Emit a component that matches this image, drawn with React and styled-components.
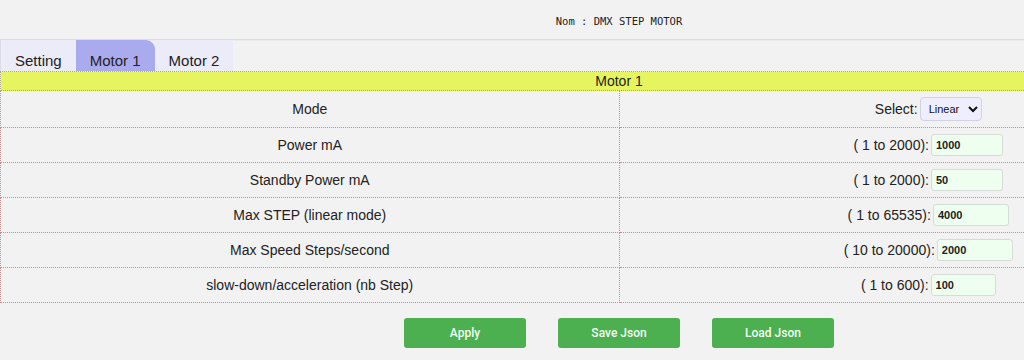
import React from 'react';
import styled, { createGlobalStyle } from 'styled-components';

const GlobalStyle = createGlobalStyle`
  html, body {
    margin: 0;
    padding: 0;
    background: #f2f2f2;
    overflow: hidden;
  }
  body {
    font-family: "Liberation Sans", Arial, sans-serif;
    color: #222;
  }
`;

const Page = styled.div`
  width: 1238px;
`;

const Header = styled.header`
  height: 36px;
  padding-top: 3px;
  display: flex;
  align-items: center;
  justify-content: center;
  border-bottom: 1px solid #dcdcdc;
  box-shadow: 0 1px 1px rgba(0, 0, 0, 0.03);
  font-family: "DejaVu Sans Mono", "Liberation Mono", monospace;
  font-size: 10.5px;
  color: #222;
  white-space: pre;
`;

const TabBar = styled.nav`
  display: flex;
  height: 31px;
`;

const Tab = styled.div`
  padding: 12px 14px 2px;
  font-size: 15px;
  line-height: 17px;
  color: #222;
  cursor: pointer;
  background: ${(p) => (p.$active ? '#aaaaee' : '#ececf9')};
  border-top-right-radius: ${(p) => (p.$active ? '9px' : '0')};
  border-left: ${(p) => (p.$first ? '1px solid #dcdce6' : 'none')};
`;

const Grid = styled.table`
  width: 100%;
  border-collapse: collapse;
  font-size: 14px;
`;

const Caption = styled.th`
  height: 18px;
  padding: 0;
  font-weight: normal;
  background: #e6f55f;
  border: 1px dotted #a8a48c;
  color: #222;
`;

const Cell = styled.td`
  width: 50%;
  height: ${(p) => (p.$tall ? '36px' : '34px')};
  padding: 0;
  text-align: center;
  vertical-align: middle;
  border: 1px dotted #c48e8e;
`;

const Field = styled.span`
  display: inline-flex;
  align-items: center;
  gap: 2px;
`;

const NumberInput = styled.input`
  box-sizing: border-box;
  width: ${(p) => p.$w}px;
  height: 22px;
  padding: 0 4px;
  border: 1px solid #d6dcd6;
  border-radius: 3px;
  background: #efffef;
  font-family: "Liberation Sans", Arial, sans-serif;
  font-size: 11px;
  font-weight: bold;
  color: #222;
  outline: none;
`;

const Select = styled.select`
  box-sizing: border-box;
  width: 62px;
  height: 24px;
  padding: 0 2px 0 4px;
  border: 1px solid #d2d2e2;
  border-radius: 4px;
  background: #eeeeff;
  font-family: "Liberation Sans", Arial, sans-serif;
  font-size: 11px;
  color: #111;
`;

const Actions = styled.div`
  display: flex;
  justify-content: center;
  gap: 32px;
  margin-top: 15px;
`;

const Button = styled.button`
  width: 122px;
  height: 30px;
  border: none;
  border-radius: 3px;
  background: #4caf50;
  color: #f4fff4;
  font-family: Roboto, "Liberation Sans", sans-serif;
  font-size: 12px;
  font-weight: 500;
  cursor: pointer;
`;

const params = [
  { label: 'Power mA', range: '( 1 to 2000):', value: '1000', w: 72 },
  { label: 'Standby Power mA', range: '( 1 to 2000):', value: '50', w: 72 },
  { label: 'Max STEP (linear mode)', range: '( 1 to 65535):', value: '4000', w: 76 },
  { label: 'Max Speed Steps/second', range: '( 10 to 20000):', value: '2000', w: 76 },
  { label: 'slow-down/acceleration (nb Step)', range: '( 1 to 600):', value: '100', w: 65 },
];

export default function App() {
  return (
    <Page>
      <GlobalStyle />
      <Header>Nom : DMX STEP MOTOR</Header>
      <TabBar>
        <Tab $first>Setting</Tab>
        <Tab $active>Motor 1</Tab>
        <Tab>Motor 2</Tab>
      </TabBar>
      <Grid>
        <thead>
          <tr>
            <Caption colSpan={2}>Motor 1</Caption>
          </tr>
        </thead>
        <tbody>
          <tr>
            <Cell $tall>Mode</Cell>
            <Cell $tall>
              <Field>
                Select:
                <Select defaultValue="linear">
                  <option value="linear">Linear</option>
                  <option value="rotary">Rotary</option>
                </Select>
              </Field>
            </Cell>
          </tr>
          {params.map((p) => (
            <tr key={p.label}>
              <Cell>{p.label}</Cell>
              <Cell>
                <Field>
                  {p.range}
                  <NumberInput $w={p.w} defaultValue={p.value} />
                </Field>
              </Cell>
            </tr>
          ))}
        </tbody>
      </Grid>
      <Actions>
        <Button>Apply</Button>
        <Button>Save Json</Button>
        <Button>Load Json</Button>
      </Actions>
    </Page>
  );
}
